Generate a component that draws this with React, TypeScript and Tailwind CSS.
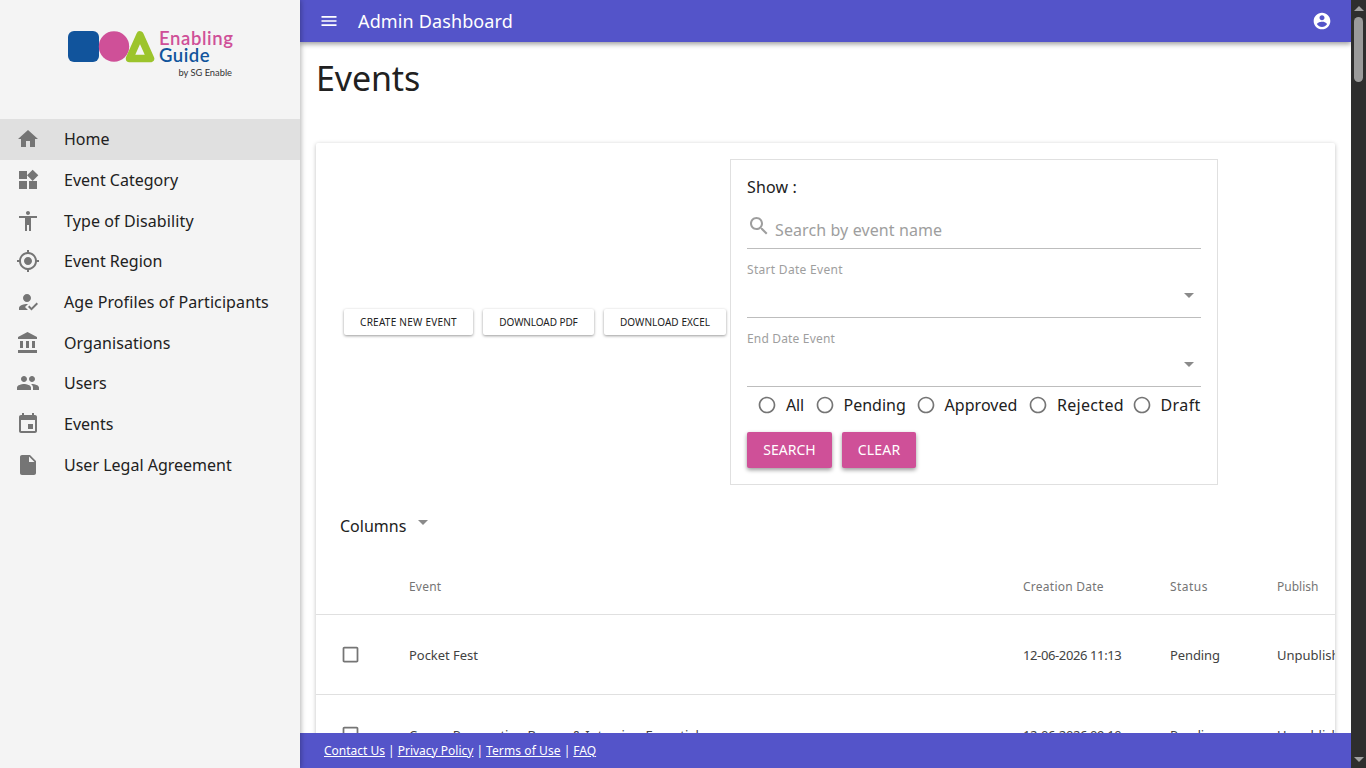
import { ReactNode } from "react"

const navItems = [
  { label: "Home", active: true, fit: "", d: "M10 20v-6h4v6h5v-8h3L12 3 2 12h3v8z" },
  { label: "Event Category", fit: "", d: "M13 13v8h8v-8h-8zM3 21h8v-8H3v8zM3 3v8h8V3H3zm13.66-1.31L11 7.34 16.66 13l5.66-5.66-5.66-5.65z" },
  { label: "Type of Disability", fit: "tracking-[0.11px]", d: "M12 2c1.1 0 2 .9 2 2s-.9 2-2 2-2-.9-2-2 .9-2 2-2zm9 7h-6v13h-2v-6h-2v6H9V9H3V7h18v2z" },
  { label: "Event Region", fit: "", d: "M12 8c-2.21 0-4 1.79-4 4s1.79 4 4 4 4-1.79 4-4-1.79-4-4-4zm8.94 3c-.46-4.17-3.77-7.48-7.94-7.94V1h-2v2.06C6.83 3.52 3.52 6.83 3.06 11H1v2h2.06c.46 4.17 3.77 7.48 7.94 7.94V23h2v-2.06c4.17-.46 7.48-3.77 7.94-7.94H23v-2h-2.06zM12 19c-3.87 0-7-3.13-7-7s3.13-7 7-7 7 3.13 7 7-3.13 7-7 7z" },
  { label: "Age Profiles of Participants", fit: "tracking-[0.1px]", d: "M9 17l3-2.94c-.39-.04-.68-.06-1-.06-2.67 0-8 1.34-8 4v2h9l-3-3zm2-5c2.21 0 4-1.79 4-4s-1.79-4-4-4-4 1.79-4 4 1.79 4 4 4zM15.47 20.5L12 17l1.4-1.41 2.07 2.08 5.13-5.17 1.4 1.41z" },
  { label: "Organisations", fit: "tracking-[0.07px]", d: "M4 10v7h3v-7H4zm6 0v7h3v-7h-3zM2 22h19v-3H2v3zm14-12v7h3v-7h-3zm-4.5-9L2 6v2h19V6l-9.5-5z" },
  { label: "Users", fit: "", d: "M16 11c1.66 0 2.99-1.34 2.99-3S17.66 5 16 5c-1.66 0-3 1.34-3 3s1.34 3 3 3zm-8 0c1.66 0 2.99-1.34 2.99-3S9.66 5 8 5C6.34 5 5 6.34 5 8s1.34 3 3 3zm0 2c-2.33 0-7 1.17-7 3.5V19h14v-2.5c0-2.33-4.67-3.5-7-3.5zm8 0c-.29 0-.62.02-.97.05 1.16.84 1.97 1.97 1.97 3.45V19h6v-2.5c0-2.33-4.67-3.5-7-3.5z" },
  { label: "Events", fit: "", d: "M17 12h-5v5h5v-5zM16 1v2H8V1H6v2H5c-1.11 0-1.99.9-1.99 2L3 19c0 1.1.89 2 2 2h14c1.1 0 2-.9 2-2V5c0-1.1-.9-2-2-2h-1V1h-2zm3 18H5V8h14v11z" },
  { label: "User Legal Agreement", fit: "", d: "M6 2c-1.1 0-1.99.9-1.99 2L4 20c0 1.1.89 2 1.99 2H18c1.1 0 2-.9 2-2V8l-6-6H6zm7 7V3.5L18.5 9H13z" },
]

const radios = [
  { label: "All", fit: "w-[19.5px] tracking-[-0.2px]" },
  { label: "Pending", fit: "w-[63px]" },
  { label: "Approved", fit: "w-[74.5px] tracking-[0.05px]" },
  { label: "Rejected", fit: "w-[65.5px] tracking-[0.3px]" },
  { label: "Draft", fit: "w-[40.5px] tracking-[0.4px]" },
]

const footerLinks = [
  { label: "Contact Us", fit: "" },
  { label: "Privacy Policy", fit: "" },
  { label: "Terms of Use", fit: "tracking-[0.1px]" },
  { label: "FAQ", fit: "" },
]

const rows = [
  { event: "Pocket Fest", date: "12-06-2026 11:13" },
  { event: "Career Preparation Bazaar & Interview Essentials", date: "12-06-2026 09:10" },
]

function Icon({ d, className }: { d: string; className: string }) {
  return (
    <svg viewBox="0 0 24 24" fill="currentColor" className={className}>
      <path d={d} />
    </svg>
  )
}

const arrowDown = "M7 10l5 5 5-5z"
const radioOff = "M12 2C6.48 2 2 6.48 2 12s4.48 10 10 10 10-4.48 10-10S17.52 2 12 2zm0 18c-4.42 0-8-3.58-8-8s3.58-8 8-8 8 3.58 8 8-3.58 8-8 8z"
const checkboxOff = "M19 5v14H5V5h14m0-2H5c-1.1 0-2 .9-2 2v14c0 1.1.9 2 2 2h14c1.1 0 2-.9 2-2V5c0-1.1-.9-2-2-2z"

function Logo() {
  return (
    <div className="flex h-[119px] items-start pl-[68px] pt-[30px]">
      <svg viewBox="0 0 87 33" className="h-[33px] w-[87px] shrink-0">
        <rect x="0" y="1" width="31" height="31" rx="6" fill="#11549c" />
        <circle cx="46" cy="16.5" r="15.2" fill="#cf5098" />
        <path d="M72 5 L82.5 28.5 H61.5 Z" fill="none" stroke="#9cc42c" strokeWidth="7.5" strokeLinejoin="round" />
      </svg>
      <div className="ml-[4px] flex w-[74px] flex-col font-['Lato',sans-serif] font-semibold">
        <span className="h-[16px] whitespace-nowrap text-[18.5px] leading-[16px] tracking-[0.6px] text-[#cf5098]">Enabling</span>
        <span className="h-[20px] text-[18.5px] leading-[18px] tracking-[0.5px] text-[#11549c]">Guide</span>
        <span className="mt-[1px] whitespace-nowrap pr-[1px] text-right text-[9.3px] font-normal leading-[12px] text-[#333]">by SG Enable</span>
      </div>
    </div>
  )
}

function Sidebar() {
  return (
    <aside className="z-20 flex w-[300px] shrink-0 flex-col bg-[#f4f4f4] shadow-[1px_0_5px_rgba(0,0,0,0.3)]">
      <Logo />
      <nav>
        {navItems.map((item) => (
          <div
            key={item.label}
            className={`flex h-[40.67px] items-center pl-[16px] text-[16px] text-[#212121] ${item.active ? "bg-[#e0e0e0]" : ""}`}
          >
            <Icon d={item.d} className="h-[24px] w-[24px] shrink-0 text-[#757575]" />
            <span className={`ml-[24px] ${item.fit}`}>{item.label}</span>
          </div>
        ))}
      </nav>
    </aside>
  )
}

function ActionButton({ children, className }: { children: ReactNode; className: string }) {
  return (
    <button className={`h-[26px] shrink-0 rounded-[2px] bg-white text-[10px] uppercase text-[#212121] shadow-[0_1px_3px_rgba(0,0,0,0.4)] ${className}`}>
      {children}
    </button>
  )
}

function PinkButton({ children, className }: { children: ReactNode; className: string }) {
  return (
    <button className={`h-[36px] rounded-[2px] bg-[#cf5098] pb-[2px] text-[14px] uppercase text-white shadow-[0_2px_4px_rgba(0,0,0,0.4)] ${className}`}>
      {children}
    </button>
  )
}

function DateSelect({ label, fit }: { label: string; fit: string }) {
  return (
    <div className="relative mt-[13px] h-[56px] border-b border-[#bdbdbd]">
      <div className={`text-[12px] leading-[16px] text-[#9e9e9e] ${fit}`}>{label}</div>
      <Icon d={arrowDown} className="absolute right-0 top-[21px] h-[24px] w-[24px] text-[#8a8a8a]" />
    </div>
  )
}

function FilterBox() {
  return (
    <div className="h-[326px] w-[488px] shrink-0 border border-[#e0e0e0] px-[16px] pt-[16px]">
      <div className="text-[16px] leading-[22px] tracking-[0.15px] text-[#212121]">Show :</div>
      <div className="mt-[15px] flex h-[36px] items-start border-b border-[#bdbdbd]">
        <Icon d="M15.5 14h-.79l-.28-.27C15.41 12.59 16 11.11 16 9.5 16 5.91 13.09 3 9.5 3S3 5.91 3 9.5 5.91 16 9.5 16c1.61 0 3.09-.59 4.23-1.57l.27.28v.79l5 4.99L20.49 19l-4.99-5zm-6 0C7.01 14 5 11.99 5 9.5S7.01 5 9.5 5 14 7.01 14 9.5 11.99 14 9.5 14z" className="mt-[1px] h-[24px] w-[24px] shrink-0 text-[#9e9e9e]" />
        <span className="ml-[4px] mt-[5px] text-[16px] leading-[24px] tracking-[0.1px] text-[#9e9e9e]">Search by event name</span>
      </div>
      <DateSelect label="Start Date Event" fit="tracking-[0.3px]" />
      <DateSelect label="End Date Event" fit="tracking-[0.17px]" />
      <div className="mt-[6px] flex h-[24px] items-center justify-end gap-[9px]">
        {radios.map((r) => (
          <label key={r.label} className="flex items-center gap-[9px] text-[16px] text-[#212121]">
            <Icon d={radioOff} className="h-[20px] w-[20px] text-[#757575]" />
            <span className={`whitespace-nowrap ${r.fit}`}>{r.label}</span>
          </label>
        ))}
      </div>
      <div className="mt-[15px] flex gap-[10px]">
        <PinkButton className="w-[85px]">Search</PinkButton>
        <PinkButton className="w-[74px] tracking-[0.2px]">Clear</PinkButton>
      </div>
    </div>
  )
}

function EventsTable() {
  return (
    <div className="overflow-hidden">
      <div className="flex h-[58px] w-[1100px] items-center border-b border-[#e0e0e0] pt-[2px] text-[12px] text-[#757575]">
        <div className="w-[93px]" />
        <div className="w-[614px] tracking-[0.2px]">Event</div>
        <div className="w-[147px] tracking-[0.25px]">Creation Date</div>
        <div className="w-[107px] tracking-[0.45px]">Status</div>
        <div>Publish</div>
      </div>
      {rows.map((row) => (
        <div key={row.event} className="flex h-[80px] w-[1100px] items-center border-b border-[#e0e0e0] pt-[2px] text-[13px] text-[#424242]">
          <div className="flex w-[93px] justify-start pl-[24px]">
            <Icon d={checkboxOff} className="-mt-[3px] h-[21px] w-[21px] text-[#757575]" />
          </div>
          <div className="w-[614px] tracking-[-0.04px]">{row.event}</div>
          <div className="w-[147px] tracking-[-0.38px]">{row.date}</div>
          <div className="w-[107px] tracking-[-0.1px]">Pending</div>
          <div>Unpublish</div>
        </div>
      ))}
    </div>
  )
}

function Scrollbar() {
  return (
    <div className="z-30 flex w-[15px] shrink-0 flex-col items-center justify-between bg-[#2e2e2e] py-[6px]">
      <div className="flex w-full flex-col items-center">
        <div className="h-0 w-0 border-x-[5px] border-b-[5px] border-x-transparent border-b-[#a0a0a0]" />
        <div className="mt-[6px] h-[65px] w-[9px] rounded-full bg-[#9b9b9b]" />
      </div>
      <div className="h-0 w-0 border-x-[5px] border-t-[5px] border-x-transparent border-t-[#a0a0a0]" />
    </div>
  )
}

export default function App() {
  return (
    <div className="flex h-screen overflow-hidden bg-white font-['Noto_Sans',sans-serif]">
      <Sidebar />
      <div className="flex min-w-0 flex-1 flex-col">
        <header className="z-10 flex h-[42px] shrink-0 items-center justify-between bg-[#5454c9] pl-[19px] pr-[19px] text-white shadow-[0_2px_5px_rgba(0,0,0,0.4)]">
          <div className="flex items-center">
            <Icon d="M3 18h18v-2H3v2zm0-5h18v-2H3v2zm0-7v2h18V6H3z" className="h-[20px] w-[20px]" />
            <span className="ml-[19px] text-[18px] tracking-[0.13px]">Admin Dashboard</span>
          </div>
          <Icon d="M12 2C6.48 2 2 6.48 2 12s4.48 10 10 10 10-4.48 10-10S17.52 2 12 2zm0 3c1.66 0 3 1.34 3 3s-1.34 3-3 3-3-1.34-3-3 1.34-3 3-3zm0 14.2c-2.5 0-4.71-1.28-6-3.22.03-1.99 4-3.08 6-3.08 1.99 0 5.97 1.09 6 3.08-1.29 1.94-3.5 3.22-6 3.22z" className="h-[20px] w-[20px]" />
        </header>
        <main className="min-h-0 flex-1 overflow-hidden pl-[16px] pr-[16px]">
          <h1 className="pt-[13px] text-[34px] leading-[46px] tracking-[-0.15px] text-[#212121]">Events</h1>
          <section className="mt-[42px] rounded-[2px] bg-white shadow-[0_1px_4px_rgba(0,0,0,0.25)]">
            <div className="flex items-center pt-[16px]">
              <div className="flex gap-[10px] pl-[28px] pr-[4px]">
                <ActionButton className="w-[129px] tracking-[0.25px]">Create New Event</ActionButton>
                <ActionButton className="w-[111px] tracking-[-0.08px]">Download PDF</ActionButton>
                <ActionButton className="w-[122px] tracking-[0.07px]">Download Excel</ActionButton>
              </div>
              <FilterBox />
            </div>
            <div className="flex h-[72px] items-center pl-[24px] pt-[10px] text-[16px] text-[#212121]">
              <span>Columns</span>
              <Icon d={arrowDown} className="-mt-[9px] ml-[5px] h-[24px] w-[24px] text-[#8a8a8a]" />
            </div>
            <EventsTable />
          </section>
        </main>
        <footer className="z-10 flex h-[35px] shrink-0 items-center gap-[3px] bg-[#5454c9] pl-[24px] text-[12px] text-white">
          {footerLinks.map((link, i) => (
            <span key={link.label} className="flex gap-[3px]">
              {i > 0 && <span>|</span>}
              <a className={`underline ${link.fit}`}>{link.label}</a>
            </span>
          ))}
        </footer>
      </div>
      <Scrollbar />
    </div>
  )
}
